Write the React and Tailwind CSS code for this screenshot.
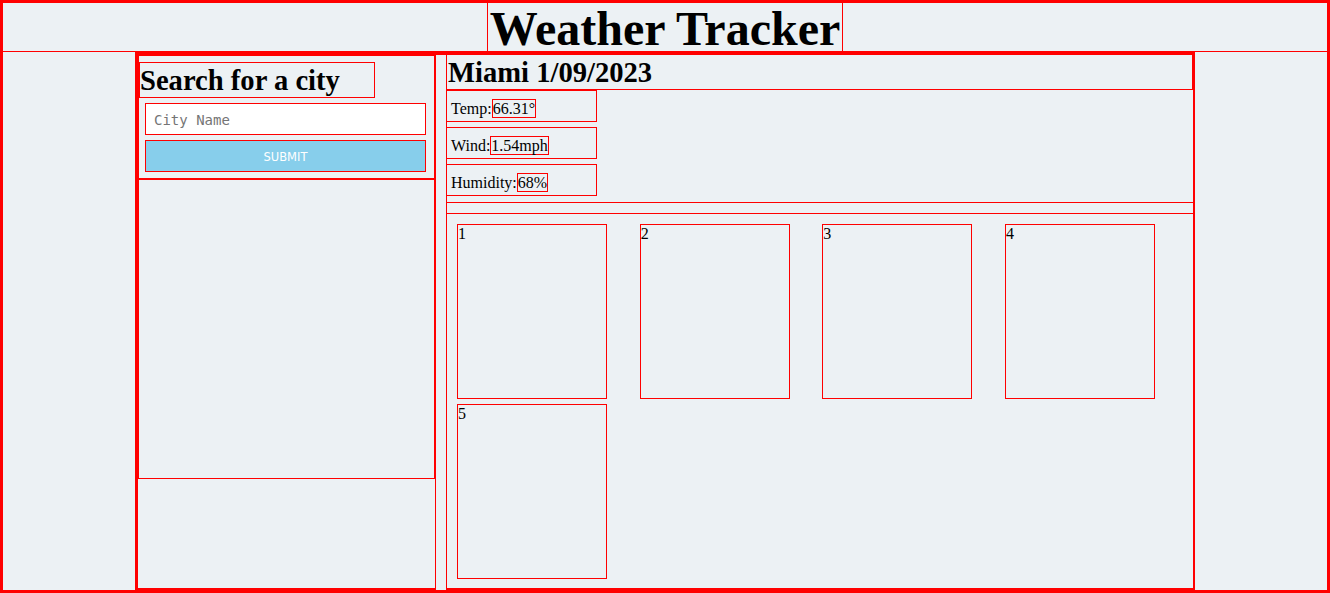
const days = [1, 2, 3, 4, 5]

const stats = [
  { label: 'Temp:', value: '66.31°' },
  { label: 'Wind:', value: '1.54mph' },
  { label: 'Humidity:', value: '68%' },
]

export default function App() {
  return (
    <div className="w-[1330px] h-[593px] border-2 border-[#ff0000] bg-[#ecf1f4] text-black font-['Liberation_Serif','Times_New_Roman',serif]">
      <div className="h-full border border-[#ff0000] flex flex-col">
        {/* header */}
        <header className="h-[49px] shrink-0 border-b border-[#ff0000] flex justify-center items-start">
          <h1 className="-mt-px h-[53px] shrink-0 border border-[#ff0000] px-[2px] text-[48px] font-bold leading-[51px] whitespace-nowrap">
            Weather Tracker
          </h1>
        </header>

        <main className="flex-1 min-h-0">
          <div className="mx-auto w-[1060px] h-full border-t-[3px] border-x-2 border-[#ff0000] flex">
            {/* search column */}
            <aside className="w-[299px] shrink-0 border-x border-b-2 border-[#ff0000] flex flex-col">
              <form
                className="border border-[#ff0000] px-[6px] pt-[6px] pb-[6px] flex flex-col gap-[5px]"
                onSubmit={(ev) => ev.preventDefault()}
              >
                <h2 className="w-[236px] h-[36px] -ml-[6px] border border-[#ff0000] text-[28.6px] font-bold leading-[36px] whitespace-nowrap">
                  Search for a city
                </h2>
                <input
                  type="text"
                  placeholder="City Name"
                  className="w-[281px] h-[32px] border border-[#ff0000] bg-white px-[8px] pt-[2px] text-[14px] font-['DejaVu_Sans_Mono',monospace] outline-none placeholder:text-[#757575]"
                />
                <button
                  type="submit"
                  className="w-[281px] h-[32px] border border-[#ff0000] bg-[#87ceeb] pt-[3px] text-[11.5px] text-white font-['DejaVu_Sans',sans-serif]"
                >
                  SUBMIT
                </button>
              </form>
              <div className="h-[300px] border border-[#ff0000]"></div>
            </aside>

            {/* weather column */}
            <section className="ml-[10px] flex-1 min-w-0 border-l border-b-2 border-[#ff0000] flex flex-col">
              <div className="border-b border-[#ff0000] pb-[6px]">
                <h2 className="h-[35px] border-b border-r border-[#ff0000] pl-[1px] text-[28.6px] font-bold leading-[36px] whitespace-nowrap">
                  Miami 1/09/2023
                </h2>
                <div className="flex flex-col gap-[5px]">
                  {stats.map((s) => (
                    <div
                      key={s.label}
                      className="w-[150px] h-[32px] border-y border-r border-[#ff0000] pl-[4px] pt-[9px] text-[16px] leading-[18px] whitespace-nowrap"
                    >
                      {s.label}
                      <span className="border border-[#ff0000]">{s.value}</span>
                    </div>
                  ))}
                </div>
              </div>

              <div className="mt-[10px] flex-1 border-t border-[#ff0000] pl-[10px] pt-[10px] flex flex-wrap content-start gap-x-[32.67px] gap-y-[5px]">
                {days.map((d) => (
                  <div key={d} className="w-[150px] h-[175px] border border-[#ff0000] text-[16px] leading-[18px]">
                    {d}
                  </div>
                ))}
              </div>
            </section>
          </div>
        </main>
      </div>
    </div>
  )
}
